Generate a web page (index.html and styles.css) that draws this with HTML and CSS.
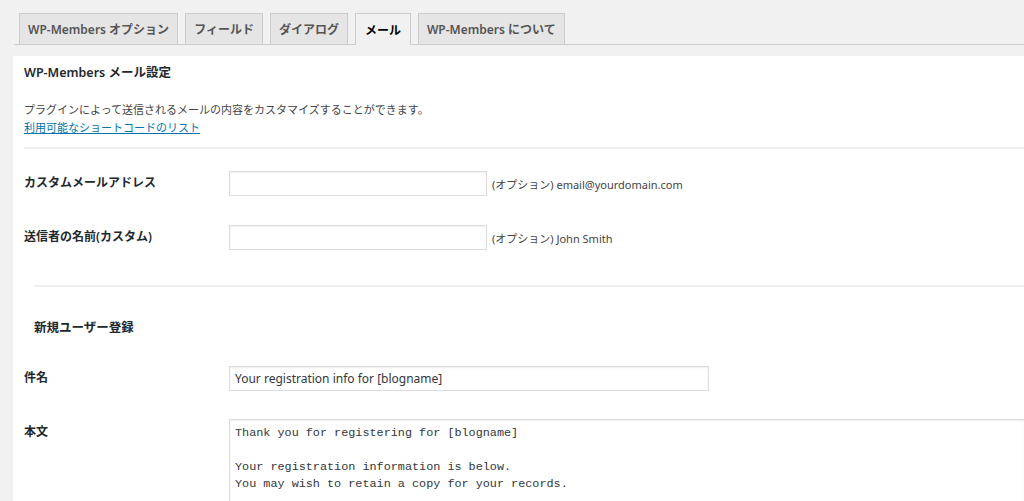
FILE: index.html
```html
<!DOCTYPE html>
<html lang="ja">
<head>
<meta charset="utf-8">
<title>WP-Members メール設定</title>
<link rel="stylesheet" href="styles.css">
</head>
<body>
<div class="wrap">
  <nav class="tabs">
    <a class="tab">WP-Members オプション</a>
    <a class="tab">フィールド</a>
    <a class="tab">ダイアログ</a>
    <a class="tab active">メール</a>
    <a class="tab">WP-Members について</a>
  </nav>
  <div class="panel">
    <h2 class="title">WP-Members メール設定</h2>
    <p class="desc">プラグインによって送信されるメールの内容をカスタマイズすることができます。<br><a class="link" href="#">利用可能なショートコードのリスト</a></p>
    <hr class="rule">
    <div class="row row-first">
      <div class="label">カスタムメールアドレス</div>
      <div class="field"><span class="input short"></span><span class="hint">(オプション) email@yourdomain.com</span></div>
    </div>
    <div class="row row-second">
      <div class="label">送信者の名前(カスタム)</div>
      <div class="field"><span class="input short"></span><span class="hint">(オプション) John Smith</span></div>
    </div>
    <hr class="rule rule-inset">
    <h3 class="section">新規ユーザー登録</h3>
    <div class="row row-subject">
      <div class="label">件名</div>
      <div class="field"><span class="input wide">Your registration info for [blogname]</span></div>
    </div>
    <div class="row row-body">
      <div class="label">本文</div>
      <div class="field"><div class="textarea">Thank you for registering for [blogname]

Your registration information is below.
You may wish to retain a copy for your records.</div></div>
    </div>
  </div>
</div>
</body>
</html>
```

FILE: styles.css
```css
html, body {
  margin: 0;
  padding: 0;
  background: #f1f1f1;
  overflow: hidden;
}
body {
  font-family: "Noto Sans", "Noto Sans CJK JP", sans-serif;
  font-size: 13px;
  color: #23282d;
}
.wrap {
  padding: 13px 0 0 14px;
}
.tabs {
  display: flex;
  gap: 7px;
  padding-left: 5px;
  border-bottom: 1px solid #ccc;
  height: 31px;
}
.tab {
  display: flex;
  align-items: center;
  justify-content: center;
  box-sizing: border-box;
  height: 31px;
  border: 1px solid #ccc;
  border-bottom: none;
  background: #e5e5e5;
  color: #555;
  font-weight: 600;
  font-size: 12px;
  padding: 0 8px;
  white-space: nowrap;
}
.tab.active {
  background: #f1f1f1;
  color: #000;
  height: 32px;
  padding: 0 9px;
}
.panel {
  margin-top: 11px;
  margin-left: -1px;
  background: #fff;
  padding: 1px 0 40px 11px;
}
.title {
  margin: 6px 0 0;
  font-size: 12.5px;
  font-weight: 600;
  line-height: 20px;
  color: #23282d;
}
.desc {
  margin: 18px 0 0;
  font-size: 11px;
  line-height: 18px;
  color: #444;
}
.link {
  color: #0073aa;
  text-decoration: underline;
}
.rule {
  border: 0;
  border-top: 2px solid #eee;
  margin: 10px 0 0;
}
.row {
  display: flex;
  align-items: flex-start;
}
.label {
  width: 205px;
  flex: none;
  font-weight: 600;
  font-size: 12px;
  line-height: 20px;
  color: #23282d;
  padding-top: 2px;
}
.field {
  display: flex;
  align-items: center;
  flex: 1;
}
.input {
  box-sizing: border-box;
  display: flex;
  align-items: center;
  height: 25px;
  border: 1px solid #ddd;
  box-shadow: inset 0 1px 2px rgba(0,0,0,.07);
  background: #fff;
  padding: 0 5px;
  font-size: 12px;
  color: #32373c;
}
.input.short { width: 258px; }
.input.wide { width: 480px; }
.hint {
  margin-left: 5px;
  font-size: 11px;
  color: #444;
}
.row-first { margin-top: 22px; }
.row-second { margin-top: 29px; }
.rule-inset {
  margin: 35px 0 0 10px;
}
.section {
  margin: 31px 0 0 10px;
  font-size: 12.5px;
  font-weight: 700;
  line-height: 20px;
  color: #23282d;
}
.row-subject { margin-top: 28px; }
.row-body { margin-top: 28px; }
.row-body .label { padding-top: 3px; }
.textarea {
  box-sizing: border-box;
  flex: 1;
  height: 120px;
  border: 1px solid #ddd;
  border-right: none;
  box-shadow: inset 0 1px 2px rgba(0,0,0,.07);
  padding: 5px 5px;
  font-family: "Liberation Mono", monospace;
  font-size: 11.8px;
  line-height: 17px;
  color: #32373c;
  white-space: pre;
}
```
